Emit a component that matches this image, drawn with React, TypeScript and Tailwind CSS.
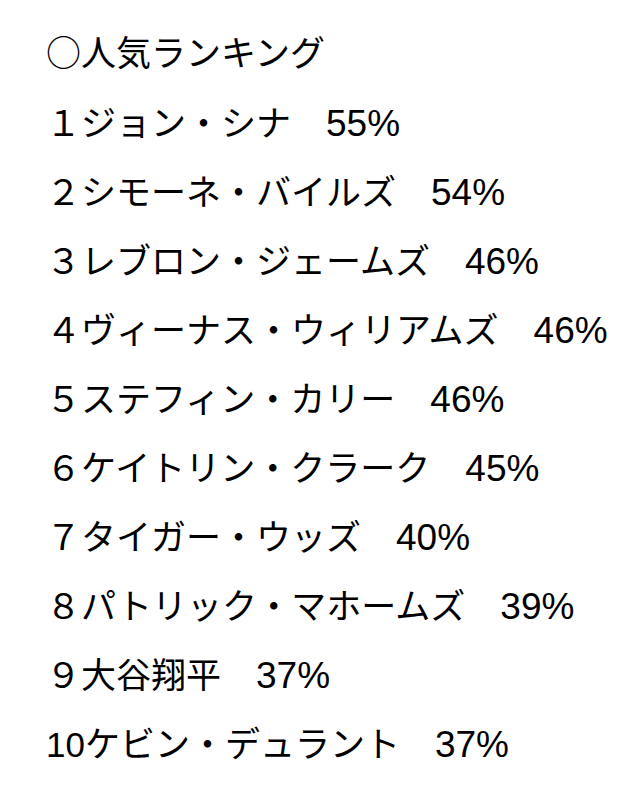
const ROWS: [string, string][] = [
  ['１ジョン・シナ　', '55%'],
  ['２シモーネ・バイルズ　', '54%'],
  ['３レブロン・ジェームズ　', '46%'],
  ['４ヴィーナス・ウィリアムズ　', '46%'],
  ['５ステフィン・カリー　', '46%'],
  ['６ケイトリン・クラーク　', '45%'],
  ['７タイガー・ウッズ　', '40%'],
  ['８パトリック・マホームズ　', '39%'],
  ['９大谷翔平　', '37%'],
  ['10ケビン・デュラント　', '37%'],
];

export default function App() {
  return (
    <div className="w-[639px] h-[809px] bg-white text-black pl-[46px] pt-[16px] font-['Liberation_Sans','Noto_Sans_CJK_JP',sans-serif] text-[35px] leading-[69px] whitespace-nowrap">
      <div className="mb-[4px] font-['Noto_Sans_CJK_JP',sans-serif]">○人気ランキング</div>
      {ROWS.map(([name, pct]) => (
        <div key={name}>
          {name}
          <span className="text-[37px]">{pct}</span>
        </div>
      ))}
    </div>
  );
}
